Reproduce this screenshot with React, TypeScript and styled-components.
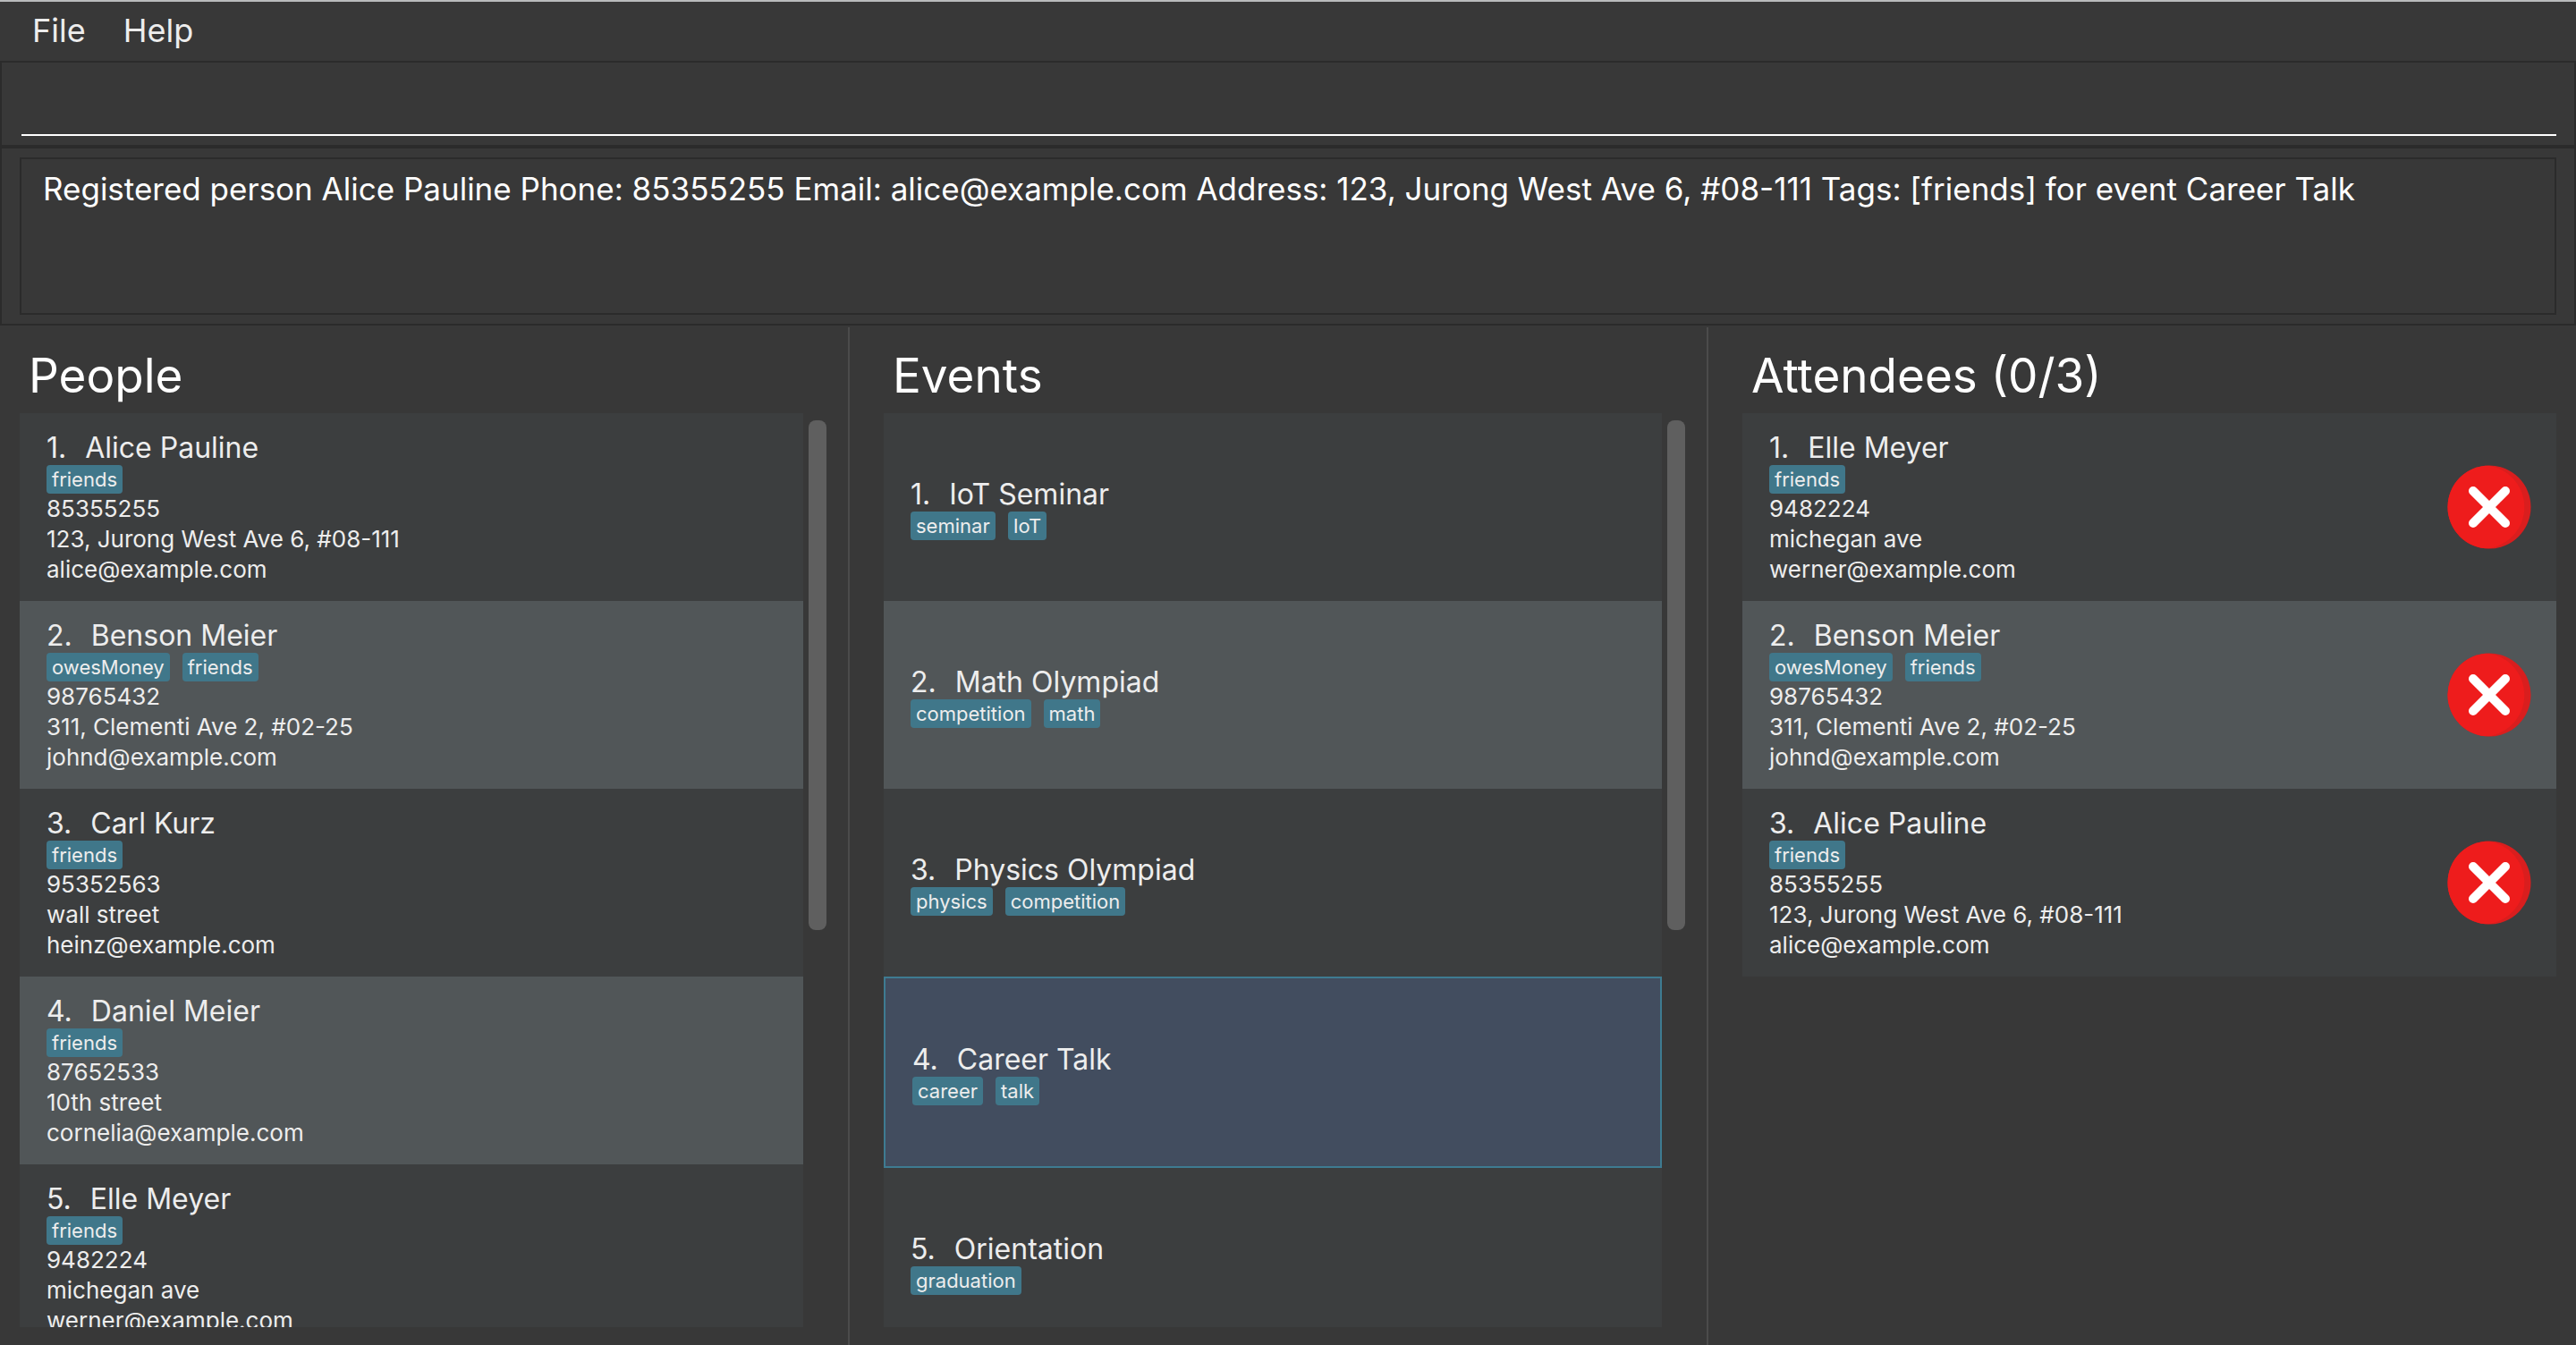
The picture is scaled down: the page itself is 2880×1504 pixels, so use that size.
import React from "react";
import styled, { createGlobalStyle, css } from "styled-components";

const GlobalStyle = createGlobalStyle`
  *, *::before, *::after { box-sizing: border-box; }
  body {
    margin: 0;
    background: #383838;
    color: #ededed;
    font-family: Inter, Roboto, "Liberation Sans", sans-serif;
    -webkit-font-smoothing: antialiased;
  }
`;

const Window = styled.div`
  display: flex;
  flex-direction: column;
  height: 100vh;
  border-top: 2px solid #b9bbbc;
`;

const MenuBar = styled.nav`
  display: flex;
  align-items: center;
  flex: none;
  height: 66px;
  padding: 0 15px 2px;
`;

const MenuButton = styled.button`
  padding: 0 21px;
  border: 0;
  background: none;
  color: #ededed;
  font: inherit;
  font-size: 36px;
  line-height: 44px;
`;

const CommandPane = styled.form`
  flex: none;
  margin: 0;
  padding: 10px 20px 10px 22px;
  border: 2px solid #2b2b2b;
`;

const CommandInput = styled.input`
  display: block;
  width: 100%;
  height: 72px;
  padding: 0 2px;
  border: 0;
  border-bottom: 2px solid #ffffff;
  background: transparent;
  color: #ffffff;
  font: inherit;
  font-size: 35px;
  outline: none;
`;

const ResultPane = styled.section`
  flex: none;
  padding: 10px 20px;
  border: 2px solid #2b2b2b;
`;

const ResultDisplay = styled.textarea`
  display: block;
  width: 100%;
  height: 176px;
  padding: 12px 24px;
  border: 2px solid #2b2b2b;
  background: transparent;
  color: #ffffff;
  font: inherit;
  font-size: 35px;
  line-height: 42px;
  resize: none;
  outline: none;
  overflow: hidden;
`;

const SplitPane = styled.main`
  display: grid;
  grid-template-columns: 948fr 960fr 972fr;
  flex: 1;
  min-height: 0;
  padding-top: 2px;
`;

const Panel = styled.section<{ $first?: boolean }>`
  display: flex;
  flex-direction: column;
  min-width: 0;
  min-height: 0;
  padding: 24px 22px 20px ${(p) => (p.$first ? 22 : 38)}px;
  border-left: ${(p) => (p.$first ? "0" : "2px solid #4b4b4b")};
`;

const PanelTitle = styled.h2`
  flex: none;
  margin: 0;
  padding: 0 10px 12px;
  color: #ffffff;
  font-size: 53px;
  font-weight: 400;
  line-height: 60px;
`;

const ListArea = styled.div`
  display: flex;
  gap: 6px;
  flex: 1;
  min-height: 0;
`;

const List = styled.ol`
  flex: 1;
  min-width: 0;
  margin: 0;
  padding: 0;
  overflow: hidden;
  list-style: none;
`;

const Track = styled.div`
  flex: none;
  width: 22px;
  padding: 8px 2px 8px 0;
`;

const Thumb = styled.div`
  border-radius: 8px;
  background: #5f5f5f;
`;

const Row = styled.li<{ $selected?: boolean }>`
  display: flex;
  align-items: center;
  justify-content: space-between;
  min-height: 210px;
  padding: 20px 28px 16px 30px;
  background: #3c3e3f;
  &:nth-child(even) {
    background: #515658;
  }
  ${(p) =>
    p.$selected &&
    css`
      min-height: 214px;
      border: 2px solid #3e7b91;
      &:nth-child(even) {
        background: #424d5f;
      }
    `}
`;

const Card = styled.div`
  display: flex;
  flex-direction: column;
  min-width: 0;
`;

const Name = styled.h3`
  display: flex;
  gap: 21px;
  margin: 0;
  font-size: 32px;
  font-weight: 400;
  line-height: 38px;
`;

const Tags = styled.div`
  display: flex;
  gap: 14px;
`;

const Tag = styled.span`
  padding: 0 6px;
  border-radius: 4px;
  background: #40778a;
  font-size: 22px;
  line-height: 32px;
`;

const Details = styled.div`
  padding-bottom: 2px;
`;

const Detail = styled.p`
  margin: 0;
  font-size: 26px;
  line-height: 34px;
  white-space: nowrap;
`;

const RemoveButton = styled.button`
  flex: none;
  padding: 0 0 4px;
  border: 0;
  background: none;
  svg {
    display: block;
    width: 94px;
    height: 94px;
  }
`;

type Person = { name: string; tags: string[]; details: string[] };

const alice: Person = {
  name: "Alice Pauline",
  tags: ["friends"],
  details: ["85355255", "123, Jurong West Ave 6, #08-111", "alice@example.com"],
};
const benson: Person = {
  name: "Benson Meier",
  tags: ["owesMoney", "friends"],
  details: ["98765432", "311, Clementi Ave 2, #02-25", "johnd@example.com"],
};
const carl: Person = {
  name: "Carl Kurz",
  tags: ["friends"],
  details: ["95352563", "wall street", "heinz@example.com"],
};
const daniel: Person = {
  name: "Daniel Meier",
  tags: ["friends"],
  details: ["87652533", "10th street", "cornelia@example.com"],
};
const elle: Person = {
  name: "Elle Meyer",
  tags: ["friends"],
  details: ["9482224", "michegan ave", "werner@example.com"],
};

const people = [alice, benson, carl, daniel, elle];
const attendees = [elle, benson, alice];

const events = [
  { name: "IoT Seminar", tags: ["seminar", "IoT"] },
  { name: "Math Olympiad", tags: ["competition", "math"] },
  { name: "Physics Olympiad", tags: ["physics", "competition"] },
  { name: "Career Talk", tags: ["career", "talk"], selected: true },
  { name: "Orientation", tags: ["graduation"] },
];

const message =
  "Registered person Alice Pauline Phone: 85355255 Email: alice@example.com Address: 123, Jurong West Ave 6, #08-111 Tags: [friends] for event Career Talk";

function ItemCard({ index, name, tags, details }: { index: number; name: string; tags: string[]; details?: string[] }) {
  return (
    <Card>
      <Name>
        <span>{index}.</span>
        <span>{name}</span>
      </Name>
      <Tags>
        {tags.map((tag) => (
          <Tag key={tag}>{tag}</Tag>
        ))}
      </Tags>
      {details && (
        <Details>
          {details.map((line) => (
            <Detail key={line}>{line}</Detail>
          ))}
        </Details>
      )}
    </Card>
  );
}

function CrossIcon({ id }: { id: string }) {
  return (
    <svg viewBox="0 0 94 94" aria-hidden="true">
      <defs>
        <clipPath id={id}>
          <circle cx="47" cy="47" r="46.5" />
        </clipPath>
      </defs>
      <circle cx="47" cy="47" r="46.5" fill="#d91e1e" />
      <circle cx="39.5" cy="47" r="46.8" fill="#ee1c1c" clipPath={`url(#${id})`} />
      <path d="M29 29L65 65M65 29L29 65" stroke="#ffffff" strokeWidth="10" strokeLinecap="round" />
    </svg>
  );
}

function ScrollBar({ visible }: { visible: number }) {
  return (
    <Track>
      <Thumb style={{ height: `${visible * 100}%` }} />
    </Track>
  );
}

export default function App() {
  return (
    <>
      <GlobalStyle />
      <Window>
        <MenuBar>
          <MenuButton type="button">File</MenuButton>
          <MenuButton type="button">Help</MenuButton>
        </MenuBar>
        <CommandPane onSubmit={(e) => e.preventDefault()}>
          <CommandInput type="text" aria-label="Command" />
        </CommandPane>
        <ResultPane>
          <ResultDisplay aria-label="Result" readOnly value={message} />
        </ResultPane>
        <SplitPane>
          <Panel $first>
            <PanelTitle>People</PanelTitle>
            <ListArea>
              <List>
                {people.map((p, i) => (
                  <Row key={p.name}>
                    <ItemCard index={i + 1} {...p} />
                  </Row>
                ))}
              </List>
              <ScrollBar visible={0.567} />
            </ListArea>
          </Panel>
          <Panel>
            <PanelTitle>Events</PanelTitle>
            <ListArea>
              <List>
                {events.map((e, i) => (
                  <Row key={e.name} $selected={e.selected}>
                    <ItemCard index={i + 1} name={e.name} tags={e.tags} />
                  </Row>
                ))}
              </List>
              <ScrollBar visible={0.567} />
            </ListArea>
          </Panel>
          <Panel>
            <PanelTitle>Attendees (0/3)</PanelTitle>
            <ListArea>
              <List>
                {attendees.map((p, i) => (
                  <Row key={p.name}>
                    <ItemCard index={i + 1} {...p} />
                    <RemoveButton type="button" aria-label={`Remove ${p.name}`}>
                      <CrossIcon id={`disc-${i}`} />
                    </RemoveButton>
                  </Row>
                ))}
              </List>
            </ListArea>
          </Panel>
        </SplitPane>
      </Window>
    </>
  );
}
